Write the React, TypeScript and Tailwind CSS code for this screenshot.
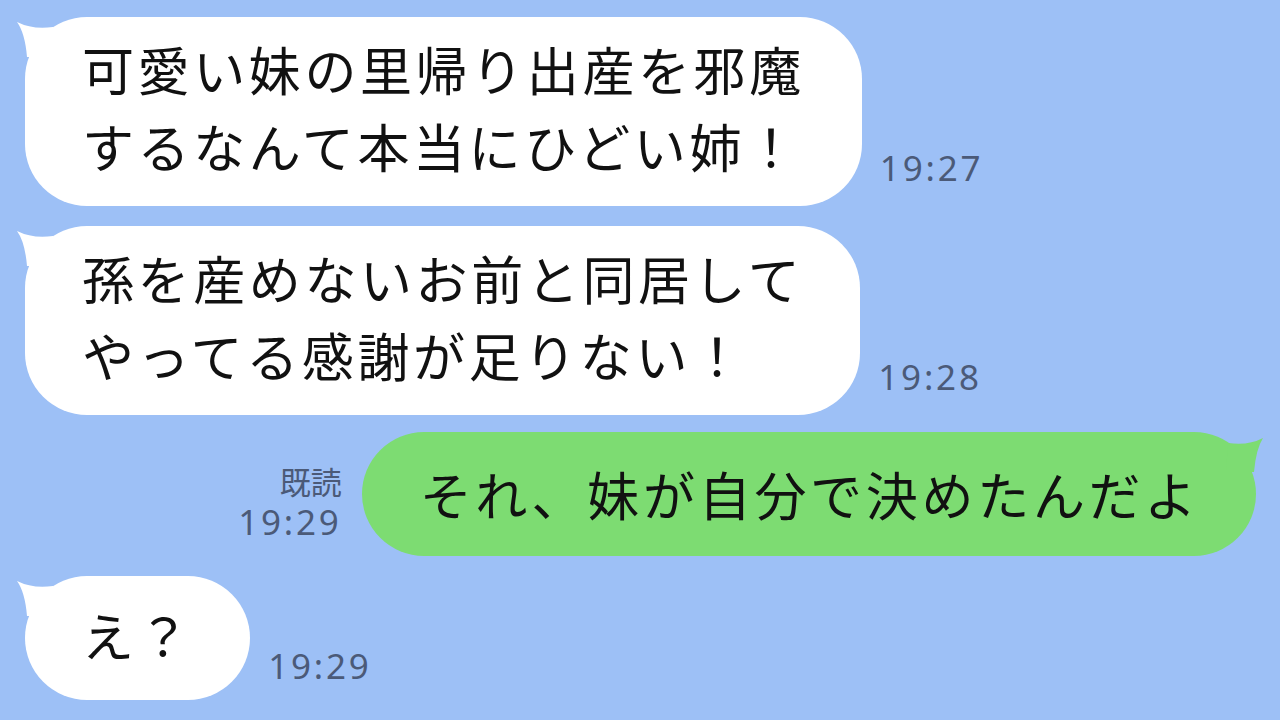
import React from 'react';

const jp = { fontFamily: '"Noto Sans CJK JP", "Noto Sans", sans-serif' };
const num = { fontFamily: '"Noto Sans", "Noto Sans CJK JP", sans-serif' };

const LeftTail = () => (
  <svg className="absolute top-0 -left-[10px]" width="50" height="50" viewBox="0 0 50 50">
    <path d="M2 5 Q18 13 38 10 L40 40 L12 40 Q10 16 2 5 Z" fill="#ffffff" />
  </svg>
);

const RightTail = () => (
  <svg className="absolute top-0 -right-[10px]" width="50" height="50" viewBox="0 0 50 50">
    <path d="M47 6 Q32 14 12 11 L10 40 L38 40 Q40 17 47 6 Z" fill="#7ddc72" />
  </svg>
);

const Time = ({ t, className = '' }: { t: string; className?: string }) => (
  <span
    className={`text-[35px] leading-[40px] tracking-[2.8px] text-[#4b5a78] ${className}`}
    style={num}
  >
    {t}
  </span>
);

const Incoming = ({ lines, time }: { lines: string[]; time: string }) => {
  const single = lines.length === 1;
  return (
    <div className="flex items-end pl-[25px]">
      <div
        className={`relative bg-white rounded-[62px] px-[57px] text-[52px] leading-[77px] tracking-[3.6px] text-[#111] ${
          single ? 'pt-[20px] pb-[27px]' : 'pt-[13px] pb-[22px]'
        }`}
        style={jp}
      >
        <LeftTail />
        <div className="relative">
          {lines.map((l) => (
            <div key={l} className="whitespace-nowrap">{l}</div>
          ))}
        </div>
      </div>
      <Time t={time} className={single ? 'ml-[18px] mb-[14px]' : 'ml-[18px] mb-[18px]'} />
    </div>
  );
};

export default function App() {
  return (
    <div className="w-[1280px] h-[720px] overflow-hidden bg-[#9dc0f6] flex flex-col pt-[17px]">
      <Incoming lines={['可愛い妹の里帰り出産を邪魔', 'するなんて本当にひどい姉！']} time="19:27" />
      <div className="h-[20px]" />
      <Incoming lines={['孫を産めないお前と同居して', 'やってる感謝が足りない！']} time="19:28" />
      <div className="h-[17px]" />
      <div className="flex items-end justify-end pr-[24px]">
        <div className="flex flex-col items-end gap-[4px] mr-[20px] mb-[14px]">
          <span className="text-[31px] leading-[34px] text-[#4b5a78]" style={jp}>既読</span>
          <Time t="19:29" />
        </div>
        <div
          className="relative bg-[#7ddc72] rounded-[62px] pl-[58px] pr-[56px] pt-[24px] pb-[24px] text-[52px] leading-[76px] tracking-[3.7px] text-[#111] whitespace-nowrap"
          style={jp}
        >
          <RightTail />
          <div className="relative">それ、妹が自分で決めたんだよ</div>
        </div>
      </div>
      <div className="h-[20px]" />
      <Incoming lines={['え？']} time="19:29" />
    </div>
  );
}
